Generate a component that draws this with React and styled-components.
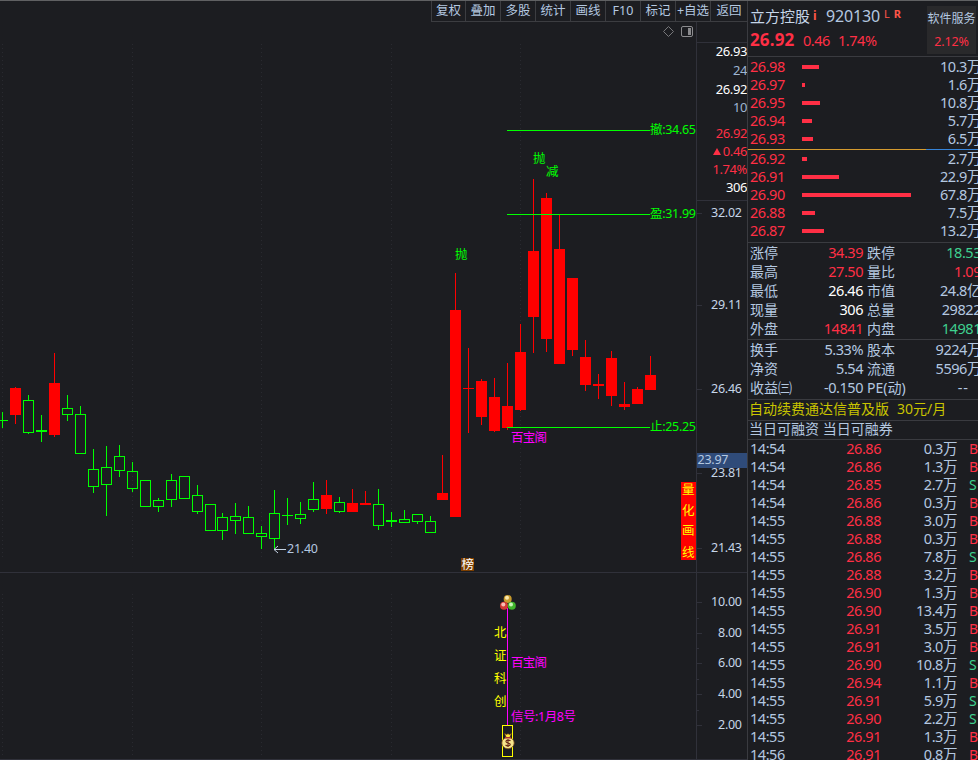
import React from 'react'
import styled, { createGlobalStyle } from 'styled-components'

const RED = '#ff2f45'
const TEXT = '#b4c8e0'
const LINE = '#3a3b40'
const AXIS = '#30313a'

const tools = ['复权', '叠加', '多股', '统计', '画线', 'F10', '标记', '+自选', '返回']

// [center x, wick top, wick bottom, body top, body bottom, up]
const candles = [
	[2, 412, 428, 420, 421, 0],
	[15, 387, 424, 388, 415, 1],
	[28, 395, 434, 400, 433, 0],
	[41, 415, 442, 430, 432, 0],
	[54, 353, 437, 383, 435, 1],
	[67, 395, 421, 408, 415, 0],
	[80, 406, 454, 414, 454, 0],
	[93, 449, 493, 469, 487, 0],
	[106, 446, 516, 467, 485, 0],
	[119, 445, 477, 456, 471, 0],
	[132, 462, 492, 471, 489, 0],
	[145, 480, 507, 480, 507, 0],
	[158, 498, 512, 500, 507, 0],
	[171, 474, 507, 480, 500, 0],
	[184, 476, 499, 476, 499, 0],
	[197, 485, 514, 495, 512, 0],
	[210, 504, 531, 504, 531, 0],
	[222, 513, 540, 517, 531, 0],
	[235, 503, 534, 516, 521, 0],
	[248, 506, 534, 517, 534, 0],
	[261, 526, 549, 533, 537, 0],
	[274, 490, 550, 513, 539, 0],
	[287, 498, 525, 515, 516, 0],
	[300, 502, 524, 514, 519, 0],
	[313, 482, 512, 499, 510, 0],
	[326, 480, 514, 495, 509, 1],
	[339, 497, 513, 502, 512, 0],
	[352, 489, 512, 503, 512, 1],
	[365, 491, 505, 503, 505, 1],
	[378, 489, 530, 504, 526, 0],
	[391, 512, 527, 520, 522, 0],
	[404, 510, 523, 519, 523, 0],
	[417, 514, 524, 514, 522, 0],
	[430, 516, 533, 521, 533, 0],
	[442, 455, 500, 493, 500, 1],
	[455, 273, 517, 310, 517, 1],
	[468, 348, 433, 388, 389, 1],
	[481, 379, 425, 381, 417, 1],
	[494, 378, 432, 397, 431, 1],
	[507, 363, 430, 406, 428, 1],
	[520, 324, 411, 352, 410, 1],
	[533, 179, 353, 251, 317, 1],
	[546, 193, 352, 198, 339, 1],
	[559, 214, 364, 249, 364, 1],
	[572, 278, 356, 278, 350, 1],
	[585, 340, 391, 357, 385, 1],
	[598, 374, 399, 384, 386, 1],
	[611, 351, 406, 358, 396, 1],
	[624, 382, 410, 404, 407, 1],
	[637, 387, 404, 389, 404, 1],
	[650, 356, 390, 375, 390, 1],
]

const levels = [
	{ y: 130, label: '撤:34.65' },
	{ y: 214, label: '盈:31.99' },
	{ y: 427, label: '止:25.25' },
]

const priceTicks = [[213, '32.02'], [305, '29.11'], [389, '26.46'], [473, '23.81'], [548, '21.43']]
const lowerTicks = [[602, '10.00'], [633, '8.00'], [663, '6.00'], [694, '4.00'], [725, '2.00']]

const asks = [['26.98', 17, '10.3万'], ['26.97', 3, '1.6万'], ['26.95', 18, '10.8万'], ['26.94', 10, '5.7万'], ['26.93', 11, '6.5万']]
const bids = [['26.92', 5, '2.7万'], ['26.91', 37, '22.9万'], ['26.90', 109, '67.8万'], ['26.88', 13, '7.5万'], ['26.87', 22, '13.2万']]

const stats = [
	['涨停', '34.39', RED, '跌停', '18.53', '#3fd08f'],
	['最高', '27.50', RED, '量比', '1.09', RED],
	['最低', '26.46', '#fff', '市值', '24.8亿', TEXT],
	['现量', '306', '#fff', '总量', '29822', TEXT],
	['外盘', '14841', RED, '内盘', '14981', '#3fd08f'],
]
const finance = [
	['换手', '5.33%', TEXT, '股本', '9224万', TEXT],
	['净资', '5.54', TEXT, '流通', '5596万', TEXT],
	['收益㈢', '-0.150', TEXT, 'PE(动)', '--', TEXT],
]

const trades = [
	['14:54', '26.86', '0.3万', 'B'],
	['14:54', '26.86', '1.3万', 'B'],
	['14:54', '26.85', '2.7万', 'S'],
	['14:54', '26.86', '0.3万', 'B'],
	['14:55', '26.88', '3.0万', 'B'],
	['14:55', '26.88', '0.3万', 'B'],
	['14:55', '26.86', '7.8万', 'S'],
	['14:55', '26.88', '3.2万', 'B'],
	['14:55', '26.90', '1.3万', 'B'],
	['14:55', '26.90', '13.4万', 'B'],
	['14:55', '26.91', '3.5万', 'B'],
	['14:55', '26.91', '3.0万', 'B'],
	['14:55', '26.90', '10.8万', 'S'],
	['14:55', '26.94', '1.1万', 'B'],
	['14:55', '26.91', '5.9万', 'S'],
	['14:55', '26.90', '2.2万', 'S'],
	['14:55', '26.91', '1.3万', 'B'],
	['14:56', '26.91', '0.8万', 'B'],
]

function Candle({ data }) {
	const [x, high, low, top, bottom, up] = data
	const color = up ? '#f00' : '#0f0'
	const solid = up || bottom - top < 3
	return (
		<g>
			<rect x={x} y={high} width="1" height={top - high} fill={color} />
			<rect x={x} y={bottom} width="1" height={low - bottom} fill={color} />
			{solid
				? <rect x={x - 5} y={top} width="11" height={bottom - top} fill={color} />
				: <rect x={x - 4.5} y={top + .5} width="10" height={bottom - top - 1} fill="none" stroke={color} />}
		</g>
	)
}

// both panes start below the toolbar, so the drawing keeps window y values
function Chart() {
	return (
		<ChartSvg width="697" height="738" viewBox="0 22 697 738">
			{[2, 132, 261, 391, 520].map(x => (
				<g key={x} stroke="#292a30" strokeDasharray="1 3">
					<path d={`M${x + .5} 44V558`} />
					<path d={`M${x + .5} 594V757`} />
				</g>
			))}
			<path d="M0 572.5H697M696.5 22V760M0 759.5H697" stroke={AXIS} />

			<path d="M668.5 26.5l5 5-5 5-5-5z" fill="none" stroke="#77777a" />
			<rect x="681.5" y="26.5" width="11" height="10" rx="1.5" fill="none" stroke="#8b8b8e" />
			<rect x="688" y="28" width="3" height="7" fill="#8b8b8e" />

			{candles.map(c => <Candle key={c[0]} data={c} />)}

			{levels.map(l => (
				<g key={l.y} fill="#0f0">
					<rect x="507" y={l.y} width="143" height="1" />
					<ChartText x="650" y={l.y + 4} textLength="46">{l.label}</ChartText>
				</g>
			))}

			<g fill="#0f0">
				<ChartText x="533" y="162.5">抛</ChartText>
				<ChartText x="546" y="176">减</ChartText>
				<ChartText x="455" y="258.5">抛</ChartText>
			</g>
			<ChartText x="511" y="442" fill="#f0f" textLength="36">百宝阁</ChartText>

			<path d="M274 549.5H286M278 546l-4 3.5 4 3.5" fill="none" stroke="#c4d2e4" />
			<ChartText x="287" y="553" fill={TEXT} textLength="31">21.40</ChartText>

			<rect x="461" y="558" width="13" height="13" fill="#7d3f00" />
			<ChartText x="461.5" y="569" fill="#fff">榜</ChartText>

			<rect x="681" y="482" width="15" height="78" fill="#f00" />
			{[['量', 494], ['化', 515], ['画', 535], ['线', 557]].map(([t, y]) => (
				<ChartText key={t} x="682" y={y} fill="#ff0">{t}</ChartText>
			))}

			<rect x="507" y="608" width="1" height="117" fill="#f0f" />
			{[['北', 637], ['证', 660], ['科', 683], ['创', 706]].map(([t, y]) => (
				<ChartText key={t} x="494" y={y} fill="#ff0">{t}</ChartText>
			))}
			<ChartText x="511" y="667" fill="#f0f" textLength="36">百宝阁</ChartText>
			<ChartText x="511" y="721" fill="#f0f" textLength="65">信号:1月8号</ChartText>

			<Balls />
			<rect x="502.5" y="725.5" width="10" height="31" fill="none" stroke="#ff0" />
			<MoneyBag />
		</ChartSvg>
	)
}

function Balls() {
	return (
		<g>
			<circle cx="507.7" cy="599" r="4" fill="#c79a2c" />
			<circle cx="507" cy="597.8" r="2" fill="#fbe9ad" />
			<circle cx="504" cy="605.8" r="4" fill="#d23a35" />
			<circle cx="503.3" cy="604.6" r="2" fill="#f9bdb5" />
			<circle cx="511.8" cy="605.8" r="4" fill="#3fb52b" />
			<circle cx="511" cy="604.6" r="2" fill="#c9f5b8" />
		</g>
	)
}

function MoneyBag() {
	return (
		<g>
			<ellipse cx="508" cy="743" rx="6.2" ry="5.7" fill="#f7e58c" stroke="#7a4a1c" strokeWidth=".8" />
			<path d="M504.5 733.5l2 1 1.5-.8 1.5.8 2-1-1.8 4h-3.4z" fill="#ffe53b" stroke="#6b3a12" strokeWidth=".6" />
			<rect x="505" y="737" width="6" height="1.5" fill="#a33" />
			<path d="M510.5 740.8c-1-1-4.6-1-4.6.8 0 2 4.4 1 4.4 2.9 0 1.7-3.6 1.7-4.8.5M508 739v8" fill="none" stroke="#6b2a1c" strokeWidth="1.1" />
		</g>
	)
}

function Axis() {
	return (
		<svg width="50" height="559" viewBox="697 201 50 559">
			<path d="M697 572.5H747M697 759.5H747" stroke={AXIS} />
			{priceTicks.map(([y, label]) => (
				<g key={y}>
					<path d={`M697 ${y + .5}h5`} stroke={AXIS} />
					<AxisText x="742" y={y + 4} textLength="31">{label}</AxisText>
				</g>
			))}
			{lowerTicks.map(([y, label]) => (
				<g key={y}>
					<path d={`M697 ${y + .5}h5`} stroke={AXIS} />
					<AxisText x="742" y={y + 4} textLength={label.length > 4 ? 31 : 24}>{label}</AxisText>
				</g>
			))}
			<path d="M697 618.5h2M697 648.5h2M697 679.5h2M697 710.5h2" stroke={AXIS} />
			<rect x="697" y="453" width="50" height="15" fill="#2f4b79" />
			<ChartText x="697.5" y="464" fill={TEXT} textLength="31">23.97</ChartText>
		</svg>
	)
}

function BookRow({ row }) {
	return (
		<Order>
			<Num $color={RED}>{row[0]}</Num>
			<Bar style={{ width: row[1] }} />
			<Num $right>{row[2]}</Num>
		</Order>
	)
}

function StatRow({ row }) {
	const [label, value, color, label2, value2, color2] = row
	return (
		<Stat>
			<Label>{label}</Label>
			<Num $right $color={color}>{value}</Num>
			<Label>{label2}</Label>
			{value2 === '--'
				? <Dashes>{value2}</Dashes>
				: <Num $right $color={color2}>{value2}</Num>}
		</Stat>
	)
}

export default function App() {
	return (
		<>
			<GlobalStyle />
			<Window>
				<Main>
					<Toolbar>
						{tools.map(t => <Tool key={t}>{t}</Tool>)}
					</Toolbar>
					<Panes>
						<Chart />
						<AxisColumn>
							<Quotes>
								<Quote $h={18} $color="#fff">26.93</Quote>
								<Quote $h={19}>24</Quote>
								<Quote $h={19} $color="#fff">26.92</Quote>
								<Quote $h={18}>10</Quote>
								<Quote $h={18} $gap={8} $color={RED}>26.92</Quote>
								<Quote $h={18} $color={RED}><Triangle />0.46</Quote>
								<Quote $h={18} $color={RED}>1.74%</Quote>
								<Quote $h={18} $color="#fff">306</Quote>
							</Quotes>
							<Axis />
						</AxisColumn>
					</Panes>
				</Main>

				<Side>
					<Header>
						<div>
							<NameRow>
								<Name>立方控股</Name>
								<Info>i</Info>
								<Code>920130</Code>
								<Flags><span>L</span><b>R</b></Flags>
							</NameRow>
							<PriceRow>
								<Price>26.92</Price>
								<Num $color={RED}>0.46</Num>
								<Num $color={RED}>1.74%</Num>
							</PriceRow>
						</div>
						<Sector>
							<span>软件服务</span>
							<SectorChange>2.12%</SectorChange>
						</Sector>
					</Header>
					<Book>{asks.map(r => <BookRow key={r[0]} row={r} />)}</Book>
					<Ratio />
					<Book $bids>{bids.map(r => <BookRow key={r[0]} row={r} />)}</Book>
					<Block $h={97}>{stats.map(r => <StatRow key={r[0]} row={r} />)}</Block>
					<Block $h={60}>{finance.map(r => <StatRow key={r[0]} row={r} />)}</Block>
					<Notice $h={21} $yellow>自动续费通达信普及版<span>30元/月</span></Notice>
					<Notice $h={19}>当日可融资 当日可融券</Notice>
					<Trades>
						{trades.map(([time, price, volume, side], i) => (
							<Trade key={i}>
								<Num>{time}</Num>
								<Num $right $color={RED}>{price}</Num>
								<Num $right>{volume}</Num>
								<TradeSide $color={side === 'B' ? RED : '#3fd08f'}>{side}</TradeSide>
							</Trade>
						))}
					</Trades>
				</Side>
			</Window>
		</>
	)
}

const GlobalStyle = createGlobalStyle`
	* {
		box-sizing: border-box;
	}
	body {
		margin: 0;
		background: #1c1d21;
		overflow: hidden;
	}
`

const Window = styled.div`
	display: flex;
	width: 978px;
	height: 760px;
	overflow: hidden;
	border-top: 1px solid #606163;
	background: #1c1d21;
	color: ${TEXT};
	font-family: 'Noto Sans', 'Noto Sans CJK SC', sans-serif;
	font-size: 14px;
	white-space: nowrap;
`
const Main = styled.main`
	width: 747px;
	flex: none;
`
const Toolbar = styled.nav`
	display: flex;
	justify-content: flex-end;
	height: 21px;
`
const Tool = styled.div`
	display: flex;
	align-items: center;
	justify-content: center;
	width: 35px;
	height: 21px;
	border-left: 1px solid #3c3d41;
	border-bottom: 1px solid #3c3d41;
	font-size: 12.5px;
	line-height: 18px;
	overflow: hidden;

	&:first-child {
		width: 34px;
	}
	&:last-child {
		width: 37px;
	}
`
const Panes = styled.div`
	display: flex;
	height: 738px;
`
const ChartSvg = styled.svg`
	flex: none;
	display: block;
`
const ChartText = styled.text`
	font-family: 'Noto Sans', 'Noto Sans CJK SC', sans-serif;
	font-size: 12.5px;
`
const AxisText = styled(ChartText)`
	fill: #c6d6e8;
	text-anchor: end;
`
const AxisColumn = styled.div`
	width: 50px;
`
const Quotes = styled.div`
	height: 179px;
	padding-top: 20px;
	border-bottom: 1px solid ${AXIS};
	background: linear-gradient(${AXIS}, ${AXIS}) 0 20px / 100% 1px no-repeat;
`
const Quote = styled.div`
	display: flex;
	align-items: center;
	justify-content: flex-end;
	height: ${p => p.$h}px;
	margin-top: ${p => p.$gap || 0}px;
	color: ${p => p.$color || '#9fb6d3'};
	font-size: 13px;
	line-height: 18px;
	letter-spacing: -.4px;
`
const Triangle = styled.i`
	border: 4px solid transparent;
	border-top: 0;
	border-bottom: 7px solid ${RED};
	margin-right: 2px;
`

const Side = styled.aside`
	width: 231px;
	flex: none;
	overflow: hidden;
	border-left: 1px solid ${LINE};
`
const Header = styled.header`
	display: flex;
	justify-content: space-between;
	height: 56px;
	padding: 4px 2px 0 2px;
	border-bottom: 1px solid ${LINE};
`
const NameRow = styled.div`
	display: flex;
	align-items: center;
	height: 21px;
	line-height: 20px;
`
const Name = styled.span`
	width: 63px;
	font-size: 15px;
	color: #c6d6e8;
`
const Info = styled.b`
	width: 13px;
	color: #ff5548;
	font-size: 12px;
`
const Code = styled.span`
	width: 58px;
	font-size: 16px;
	letter-spacing: -.15px;
`
const Flags = styled.span`
	display: flex;
	gap: 4px;
	padding-bottom: 3px;
	color: #ff5548;
	font-size: 11px;
`
const PriceRow = styled.div`
	display: flex;
	align-items: center;
	gap: 8px;
	height: 28px;
	margin-top: 1px;
	line-height: 18px;
`
const Price = styled.b`
	width: 45px;
	padding-bottom: 2px;
	color: ${RED};
	font-size: 17px;
	letter-spacing: .15px;
`
const Sector = styled.div`
	display: flex;
	flex-direction: column;
	justify-content: space-between;
	align-items: center;
	width: 49px;
	height: 48px;
	margin-top: 1px;
	padding: 4px 0 3px;
	background: #29292b;
	font-size: 12px;
	line-height: 18px;
`
const SectorChange = styled.span`
	color: ${RED};
	font-size: 12.5px;
	letter-spacing: -.1px;
`
const Num = styled.span`
	padding-bottom: 2px;
	color: ${p => p.$color || TEXT};
	font-size: 14.5px;
	letter-spacing: -.45px;
	text-align: ${p => p.$right ? 'right' : 'left'};
`
const Dashes = styled.span`
	padding: 0 12px 2px 0;
	font-size: 14.5px;
	letter-spacing: 1px;
	text-align: right;
`
const Book = styled.div`
	height: ${p => p.$bids ? 93 : 92}px;
	padding-top: ${p => p.$bids ? 0 : 1}px;
	border-bottom: ${p => p.$bids ? `1px solid ${LINE}` : 0};
`
const Order = styled.div`
	display: grid;
	grid-template-columns: 52px 110px 69px;
	align-items: center;
	width: 233px;
	height: 18px;
	padding-left: 2px;
	line-height: 16px;
`
const Bar = styled.div`
	height: 4px;
	background: ${RED};
`
const Ratio = styled.div`
	height: 1px;
	background: linear-gradient(90deg, #d59b2f 178px, #3684d8 178px);
`
const Block = styled.div`
	height: ${p => p.$h}px;
	padding-top: 1px;
	border-bottom: 1px solid ${LINE};
`
const Stat = styled.div`
	display: grid;
	grid-template-columns: 45px 68px 45px 73px;
	align-items: center;
	width: 233px;
	height: 19px;
	padding-left: 2px;
	line-height: 17px;

	span:nth-child(3) {
		padding-left: 4px;
	}
`
const Label = styled.span`
	padding-bottom: 2px;
	font-size: 14px;
`
const Notice = styled.div`
	display: flex;
	align-items: center;
	gap: 8px;
	height: ${p => p.$h}px;
	padding: 0 0 2px 1px;
	border-bottom: 1px solid ${LINE};
	color: ${p => p.$yellow ? '#c8c400' : TEXT};
	line-height: 16px;
`
const Trades = styled.div`
	height: 320px;
	overflow: hidden;
`
const Trade = styled.div`
	display: grid;
	grid-template-columns: 60px 71px 76px 20px;
	align-items: center;
	height: 18px;
	padding-left: 2px;
	line-height: 16px;
`
const TradeSide = styled.span`
	padding: 0 0 1px 12px;
	color: ${p => p.$color};
`
